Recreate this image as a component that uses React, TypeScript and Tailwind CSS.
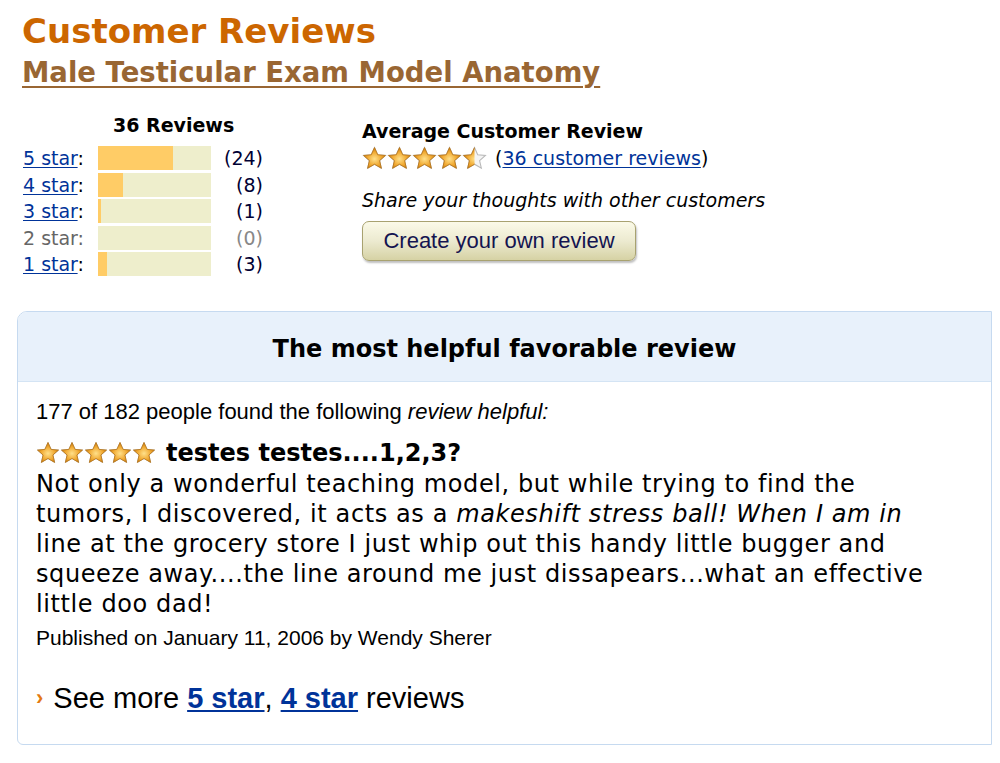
import React from "react";

const verdana = "font-['DejaVu_Sans',Verdana,sans-serif]";
const arial = "font-['Liberation_Sans',Arial,sans-serif]";

function Star({ size, fill, id }: { size: number; fill: number; id: string }) {
  // fill: 0..1 portion of the star coloured
  const pts =
    "12,1.5 15.1,8.4 22.5,9.1 16.9,14 18.6,21.4 12,17.5 5.4,21.4 7.1,14 1.5,9.1 8.9,8.4";
  return (
    <svg width={size} height={size} viewBox="0 0 24 24" className="block">
      <defs>
        <radialGradient id={`g-${id}`} cx="50%" cy="55%" r="55%">
          <stop offset="0%" stopColor="#ffe08a" />
          <stop offset="60%" stopColor="#f0a830" />
          <stop offset="100%" stopColor="#c87a10" />
        </radialGradient>
        <clipPath id={`c-${id}`}>
          <rect x="0" y="0" width={24 * fill} height="24" />
        </clipPath>
      </defs>
      <polygon points={pts} fill="#f4f4f4" stroke="#b8b8b8" strokeWidth="1" />
      <polygon
        points={pts}
        fill={`url(#g-${id})`}
        stroke="#b87414"
        strokeWidth="0.8"
        clipPath={`url(#c-${id})`}
      />
    </svg>
  );
}

function Stars({ value, size, prefix }: { value: number; size: number; prefix: string }) {
  return (
    <div className="flex">
      {[0, 1, 2, 3, 4].map((i) => (
        <Star
          key={i}
          id={`${prefix}${i}`}
          size={size}
          fill={Math.max(0, Math.min(1, value - i))}
        />
      ))}
    </div>
  );
}

const rows = [
  { label: "5 star", count: 24 },
  { label: "4 star", count: 8 },
  { label: "3 star", count: 1 },
  { label: "2 star", count: 0 },
  { label: "1 star", count: 3 },
];

export default function App() {
  return (
    <div className={`w-[1000px] h-[763px] bg-white overflow-hidden text-black ${verdana}`}>
      <div className="pl-[22px] pt-[12px]">
        <h1 className="text-[34px] leading-[38px] font-bold text-[#cc6600]">
          Customer Reviews
        </h1>
        <a className="block mt-[4px] text-[27.5px] leading-[36px] font-bold text-[#996633] underline decoration-2 underline-offset-[4px]">
          Male Testicular Exam Model Anatomy
        </a>
      </div>

      <div className="flex pl-[23px] pt-[23px]">
        <div className="w-[339px]">
          <div className="pl-[90px] text-[19px] font-bold leading-[24px]">36 Reviews</div>
          <div className="mt-[9px] flex flex-col gap-[2px]">
            {rows.map((r) => (
              <div key={r.label} className="flex items-center h-[24.5px] text-[19px]">
                <div className="w-[75px]">
                  {r.count > 0 ? (
                    <a className="text-[#003399] underline underline-offset-2">{r.label}</a>
                  ) : (
                    <span className="text-[#666666]">{r.label}</span>
                  )}
                  <span className={r.count > 0 ? "" : "text-[#666666]"}>:</span>
                </div>
                <div className="w-[113px] h-[24px] bg-[#eeeecc] flex">
                  <div
                    className="h-full bg-[#ffcc66]"
                    style={{ width: `${Math.max((r.count / 36) * 113, r.count > 0 ? 3 : 0)}px` }}
                  />
                </div>
                <div
                  className={`w-[52px] text-right ${r.count > 0 ? "text-[#000033]" : "text-[#888888]"}`}
                >
                  ({r.count})
                </div>
              </div>
            ))}
          </div>
        </div>

        <div className="pt-[6px]">
          <div className="text-[19px] font-bold leading-[24px]">Average Customer Review</div>
          <div className="flex items-center mt-[1px] text-[19px]">
            <Stars value={4.5} size={25} prefix="avg" />
            <span className="ml-[8px]">
              (<a className="text-[#003399] underline underline-offset-2">36 customer reviews</a>)
            </span>
          </div>
          <div className="mt-[15px] text-[19px] italic leading-[24px]">
            Share your thoughts with other customers
          </div>
          <button
            className={`mt-[9px] w-[274px] h-[40px] rounded-[7px] border border-[#a8a270] bg-gradient-to-b from-[#fbfae8] via-[#ecead0] to-[#d6d2a4] shadow-[1px_2px_2px_rgba(0,0,0,0.25)] text-[22px] text-[#141450] ${arial}`}
          >
            Create your own review
          </button>
        </div>
      </div>

      <div className="mt-[34px] ml-[17px] w-[975px] h-[434px] border border-[#c6daf0] rounded-tl-[10px] rounded-bl-[6px] overflow-hidden">
        <div className="h-[70px] pt-[6px] bg-[#e8f1fb] border-b border-[#d4e4f4] flex items-center justify-center">
          <div className="text-[24px] font-bold">The most helpful favorable review</div>
        </div>
        <div className="pl-[18px] pr-[10px] pt-[17px]">
          <div className={`text-[22px] leading-[26px] ${arial}`}>
            177 of 182 people found the following <i>review helpful:</i>
          </div>
          <div className="flex items-center h-[28px] mt-[14px] gap-[10px]">
            <Stars value={5} size={24} prefix="rev" />
            <span className="text-[24px] font-bold">testes testes....1,2,3?</span>
          </div>
          <p className="text-[24px] tracking-[0.6px] leading-[30px] mt-[2px] whitespace-nowrap">
            Not only a wonderful teaching model, but while trying to find the
            <br />
            tumors, I discovered, it acts as a <i>makeshift stress ball! When I am in</i>
            <br />
            line at the grocery store I just whip out this handy little bugger and
            <br />
            squeeze away....the line around me just dissapears...what an effective
            <br />
            little doo dad!
          </p>
          <div className={`mt-[7px] text-[21px] leading-[24px] ${arial}`}>
            Published on January 11, 2006 by Wendy Sherer
          </div>
          <div className={`mt-[32px] text-[29px] leading-[32px] flex items-center ${arial}`}>
            <span className="text-[#e47911] font-bold text-[22px] mr-[10px]">›</span>
            See more&nbsp;
            <a className="font-bold text-[#003399] underline underline-offset-2">5 star</a>
            ,&nbsp;
            <a className="font-bold text-[#003399] underline underline-offset-2">4 star</a>
            &nbsp;reviews
          </div>
        </div>
      </div>
    </div>
  );
}
